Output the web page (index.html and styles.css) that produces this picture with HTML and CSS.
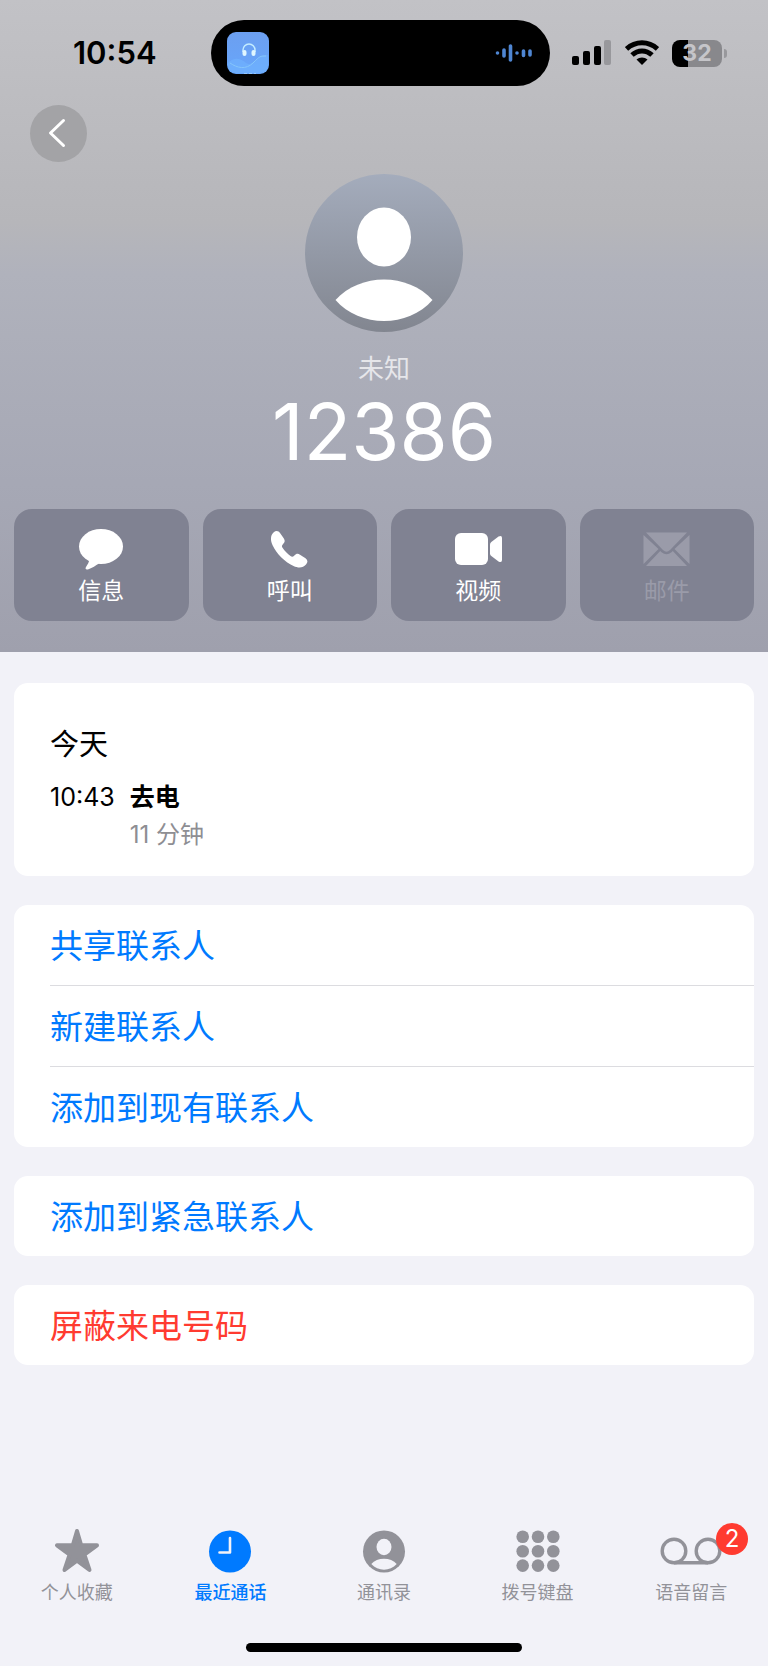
FILE: index.html
```
<!DOCTYPE html>
<html lang="zh-CN">
<head>
    <meta charset="UTF-8">
    <meta name="viewport" content="width=device-width, initial-scale=1.0">
    <title>12386</title>
    <link rel="stylesheet" href="styles.css">
</head>
<body>
    <header class="hero">
        <!-- Status bar -->
        <div class="status-bar">
            <time class="clock">10:54</time>
            <div class="island">
                <svg class="island-app" viewBox="0 0 42 42" aria-hidden="true">
                    <defs>
                        <linearGradient id="app-bg" x1="0" y1="0" x2="0" y2="1">
                            <stop offset="0" stop-color="#6c9ff0"/>
                            <stop offset="1" stop-color="#67a6fb"/>
                        </linearGradient>
                    </defs>
                    <rect width="42" height="42" rx="9" fill="url(#app-bg)"/>
                    <path d="M1 31C8 24 14 27 19 31C26 36 28 22 41 23V33Q41 41 33 41H9Q1 41 1 33Z" fill="#72b4ff" opacity=".6"/>
                    <path d="M3 31C10 36 19 38 26 31S33 24 39 24" fill="none" stroke="#86c6fb" stroke-width="1"/>
                    <path d="M16 20V18a6 6 0 0 1 12 0v2" fill="none" stroke="#c3ecff" stroke-width="1.5"/>
                    <rect x="15.5" y="18" width="4" height="6" rx="2" fill="#e0f7ff"/>
                    <rect x="24.5" y="18" width="4" height="6" rx="2" fill="#e0f7ff"/>
                    <path d="M17 41.5h12" stroke="#93c8ff" stroke-dasharray="3 2"/>
                </svg>
                <svg class="island-wave" viewBox="0 0 38 20" aria-hidden="true">
                    <g stroke="#4f86d2" stroke-width="3.6" stroke-linecap="round">
                        <path d="M2.5 10v.01M9 7v6M15.5 3v14M22 10v.01M28.5 8v4.5M35 8v4"/>
                    </g>
                </svg>
            </div>
            <div class="indicators">
                <svg class="signal" viewBox="0 0 40 26" aria-hidden="true">
                    <rect x="0" y="16" width="7" height="9" rx="2"/>
                    <rect x="11" y="11" width="7" height="14" rx="2"/>
                    <rect x="22" y="6" width="7" height="19" rx="2"/>
                    <rect x="32" y="0" width="7" height="25" rx="2" fill="#98989c"/>
                </svg>
                <svg class="wifi" viewBox="0 0 34 26" aria-hidden="true">
                    <path d="M1.5 9C10.500 .8 23.5 .8 32.5 9" fill="none" stroke="#000" stroke-width="5"/>
                    <path d="M7 15C13 9.5 21 9.5 27 15" fill="none" stroke="#000" stroke-width="5"/>
                    <path d="M11.5 19.5C14.5 16.7 19.5 16.7 22.5 19.5L17 25Z"/>
                </svg>
                <span class="battery"><span class="battery-level">32</span></span>
            </div>
        </div>

        <button type="button" class="back-button" aria-label="返回">
            <svg viewBox="0 0 57 57" aria-hidden="true">
                <path d="M33.5 15.5L20.5 28L33.5 40.5" fill="none" stroke="#fff" stroke-width="3" stroke-linecap="round" stroke-linejoin="round"/>
            </svg>
        </button>

        <!-- Caller -->
        <div class="caller">
            <svg class="avatar" viewBox="0 0 158 158" aria-hidden="true">
                <defs>
                    <linearGradient id="avatar-bg" x1="0" y1="0" x2="0" y2="1">
                        <stop offset="0" stop-color="#a4acbc"/>
                        <stop offset="1" stop-color="#828690"/>
                    </linearGradient>
                </defs>
                <circle cx="79" cy="79" r="79" fill="url(#avatar-bg)"/>
                <ellipse cx="79" cy="63" rx="27" ry="29.5" fill="#fff"/>
                <path d="M30.5 126C55 98.500 103 98.500 127.500 126C103 154 55 154 30.500 126Z" fill="#fff"/>
            </svg>
            <p class="caller-label">未知</p>
            <h1 class="caller-number">12386</h1>
        </div>

        <div class="actions">
            <button type="button" class="action">
                <svg viewBox="0 0 48 48" aria-hidden="true">
                    <ellipse cx="24" cy="21.5" rx="22" ry="17.5"/>
                    <path d="M12 34C12.5 37 10.5 39.5 9 42C7.8 44 9 45 11.5 44.2C15.5 43 18.5 40.5 22 38.5Z"/>
                </svg>
                <span>信息</span>
            </button>
            <button type="button" class="action">
                <svg viewBox="0 0 48 48" aria-hidden="true">
                    <path d="M7.5 7.5C10 5.3 12.5 5.7 14.2 8.2L17.7 13.2C19.3 15.6 18.9 17 17.3 18.8C15.6 20.6 15.6 21.5 16.7 23C18.7 26 21.5 28.8 24.5 31C26 32.1 26.8 32 28.4 30.5C30.3 28.7 31.7 28.3 34 29.7L39.5 33.3C42 35 42 37.3 40 39.6C37 43 32.5 43.3 27.5 41C18.5 36.8 10.5 28.5 6.7 20.5C4.3 15.3 4.3 10.5 7.5 7.5Z"/>
                </svg>
                <span>呼叫</span>
            </button>
            <button type="button" class="action">
                <svg viewBox="0 0 48 48" aria-hidden="true">
                    <rect x="1" y="8" width="33" height="32" rx="6"/>
                    <path d="M36 19.5Q36 18 37.3 17L44.5 11.6Q48 10 48 13V35Q48 38 44.5 36.4L37.3 31Q36 30 36 28.5Z"/>
                </svg>
                <span>视频</span>
            </button>
            <button type="button" class="action" disabled>
                <svg viewBox="0 0 48 48" aria-hidden="true">
                    <path d="M3 7.5H44L27 25Q23.5 28.5 20 25Z"/>
                    <path d="M.5 10L15.5 24L.5 39ZM46.5 10L31.5 24L46.5 39Z"/>
                    <path d="M3 41L17.2 26L18.5 27.2Q23.5 31.5 28.5 27.2L29.8 26L44 41Z"/>
                </svg>
                <span>邮件</span>
            </button>
        </div>
    </header>

    <main class="content">
        <section class="card history">
            <h2>今天</h2>
            <dl class="call">
                <dt>10:43</dt>
                <dd class="call-type">去电</dd>
                <dd class="call-length">11 分钟</dd>
            </dl>
        </section>

        <ul class="card menu">
            <li><a href="#share">共享联系人</a></li>
            <li><a href="#new">新建联系人</a></li>
            <li><a href="#existing">添加到现有联系人</a></li>
        </ul>

        <ul class="card menu">
            <li><a href="#emergency">添加到紧急联系人</a></li>
        </ul>

        <ul class="card menu">
            <li><a href="#block" class="danger">屏蔽来电号码</a></li>
        </ul>
    </main>

    <footer class="footer">
        <nav class="tabs">
            <a href="#favorites" class="tab">
                <svg viewBox="0 0 46 46" aria-hidden="true">
                    <path d="M23 3L27.2 17.3H43L30.4 26.7L35.5 42L23 32.6L10.5 42L15.6 26.7L3 17.3H18.8Z" stroke="currentColor" stroke-width="4" stroke-linejoin="round"/>
                </svg>
                <span>个人收藏</span>
            </a>
            <a href="#recents" class="tab active">
                <svg viewBox="0 0 46 46" aria-hidden="true">
                    <circle cx="23" cy="23.5" r="21"/>
                    <path d="M23 10V24.5H12.5" fill="none" stroke="#f2f2f8" stroke-width="2.6" stroke-linecap="round" stroke-linejoin="round"/>
                </svg>
                <span>最近通话</span>
            </a>
            <a href="#contacts" class="tab">
                <svg viewBox="0 0 46 46" aria-hidden="true">
                    <circle cx="23" cy="23.5" r="21"/>
                    <ellipse cx="23" cy="19" rx="7.5" ry="8.2" fill="#f2f2f8"/>
                    <path d="M10.3 36C16 29 30 29 35.7 36C29 43.6 17 43.6 10.3 36Z" fill="#f2f2f8"/>
                </svg>
                <span>通讯录</span>
            </a>
            <a href="#keypad" class="tab">
                <svg viewBox="0 0 46 46" aria-hidden="true">
                    <circle cx="7.7" cy="8.7" r="6.3"/><circle cx="23" cy="8.7" r="6.3"/><circle cx="38.3" cy="8.7" r="6.3"/>
                    <circle cx="7.7" cy="23.2" r="6.3"/><circle cx="23" cy="23.2" r="6.3"/><circle cx="38.3" cy="23.2" r="6.3"/>
                    <circle cx="7.7" cy="37.6" r="6.3"/><circle cx="23" cy="37.6" r="6.3"/><circle cx="38.3" cy="37.6" r="6.3"/>
                </svg>
                <span>拨号键盘</span>
            </a>
            <a href="#voicemail" class="tab">
                <svg class="wide" viewBox="0 0 62 46" aria-hidden="true">
                    <g fill="none" stroke="currentColor" stroke-width="3.4">
                        <circle cx="14" cy="23" r="11.8"/>
                        <circle cx="48" cy="23" r="11.8"/>
                        <path d="M14 34.8H48"/>
                    </g>
                </svg>
                <span>语音留言</span>
                <span class="badge">2</span>
            </a>
        </nav>
        <div class="home-indicator"></div>
    </footer>
</body>
</html>
```
FILE: styles.css
```
* {
    box-sizing: border-box;
}

body {
    font-family: Inter, "Noto Sans CJK SC", sans-serif;
    margin: 0;
    min-height: 100vh;
    display: flex;
    flex-direction: column;
    background: #f2f2f8;
    color: #000;
}

h1, h2, p, ul, dl, dd {
    margin: 0;
    padding: 0;
}

button {
    font: inherit;
    border: none;
    padding: 0;
    cursor: pointer;
}

a {
    text-decoration: none;
}

svg {
    display: block;
    fill: currentColor;
}

/* Header */
.hero {
    padding: 20px 14px 31px;
    background: linear-gradient(#c2c2c6 0%, #b6b6ba 34%, #b0b2bc 42%, #a6a8b5 74%, #9fa0ad 100%);
}

.status-bar {
    display: grid;
    grid-template-columns: 1fr 340px 1fr;
    align-items: center;
}

.clock {
    padding-left: 59px;
    font-size: 31px;
    font-weight: 600;
    line-height: 36px;
}

.island {
    display: flex;
    align-items: center;
    justify-content: space-between;
    height: 66px;
    margin: 0 4px 0 -3px;
    padding: 0 17px 0 16px;
    border-radius: 33px;
    background: #000;
}

.island-app {
    width: 42px;
}

.island-wave {
    width: 38px;
}

.indicators {
    display: flex;
    align-items: center;
    justify-content: flex-end;
    gap: 13px;
    padding-right: 32px;
}

.signal {
    width: 40px;
}

.wifi {
    width: 34px;
}

.battery {
    display: flex;
    position: relative;
}

.battery-level {
    width: 50px;
    border-radius: 8px;
    background: linear-gradient(90deg, #000 32%, #88888c 32%);
    color: #c5c5c9;
    font-size: 23px;
    font-weight: 700;
    line-height: 27px;
    text-align: center;
}

.battery::after {
    content: "";
    position: absolute;
    left: 52px;
    top: 9px;
    width: 3px;
    height: 9px;
    border-radius: 0 4px 4px 0;
    background: #98989c;
}

.back-button {
    display: block;
    width: 57px;
    height: 57px;
    margin: 19px 0 0 16px;
    border-radius: 50%;
    background: #a3a3a6;
}

.caller {
    display: flex;
    flex-direction: column;
    align-items: center;
    margin-top: 12px;
    color: #fff;
}

.avatar {
    width: 158px;
}

.caller-label {
    margin-top: 19px;
    font-size: 26px;
    line-height: 36px;
    color: #e6e6ea;
}

.caller-number {
    font-size: 78px;
    font-weight: 400;
    line-height: 90px;
}

.actions {
    display: grid;
    grid-template-columns: repeat(4, 1fr);
    gap: 14px;
    margin-top: 32px;
}

.action {
    display: flex;
    flex-direction: column;
    align-items: center;
    gap: 4px;
    padding: 16px 0;
    border-radius: 18px;
    background: #808292;
    color: #fff;
    font-size: 23px;
    line-height: 28px;
}

.action svg {
    width: 48px;
}

.action:disabled {
    color: #9a9ba9;
    cursor: default;
}

/* Cards */
.content {
    flex: 1;
    display: flex;
    flex-direction: column;
    gap: 29px;
    padding: 31px 14px;
}

.card {
    border-radius: 14px;
    background: #fff;
}

.history {
    padding: 42px 36px 22px;
}

.history h2 {
    margin-bottom: 13px;
    font-size: 29px;
    font-weight: 400;
    line-height: 40px;
}

.call {
    display: grid;
    grid-template-columns: auto 1fr;
    column-gap: 15px;
    font-size: 25px;
    line-height: 38px;
}

.call-type {
    font-weight: 600;
}

.call-length {
    grid-column: 2;
    font-size: 24px;
    color: #8e8e93;
}

.menu {
    padding-left: 36px;
    list-style: none;
}

.menu li + li {
    border-top: 1px solid #dcdce0;
}

.menu a {
    display: block;
    padding: 16px 0 14px;
    font-size: 33px;
    line-height: 50px;
    color: #007aff;
}

.menu .danger {
    color: #ff3b30;
}

/* Tab bar */
.footer {
    padding-bottom: 14px;
}

.tabs {
    display: grid;
    grid-template-columns: repeat(5, 1fr);
}

.tab {
    position: relative;
    display: flex;
    flex-direction: column;
    align-items: center;
    gap: 7px;
    color: #929299;
    font-size: 18px;
    line-height: 24px;
}

.tab svg {
    width: 46px;
}

.tab .wide {
    width: 62px;
}

.tab.active {
    color: #007aff;
    font-weight: 500;
}

.badge {
    position: absolute;
    left: calc(50% + 25px);
    top: -5px;
    width: 32px;
    height: 32px;
    border-radius: 50%;
    background: #ff3b30;
    color: #fff;
    font-size: 24px;
    line-height: 32px;
    text-align: center;
}

.home-indicator {
    width: 36%;
    height: 9px;
    margin: 38px auto 0;
    border-radius: 5px;
    background: #000;
}
```
